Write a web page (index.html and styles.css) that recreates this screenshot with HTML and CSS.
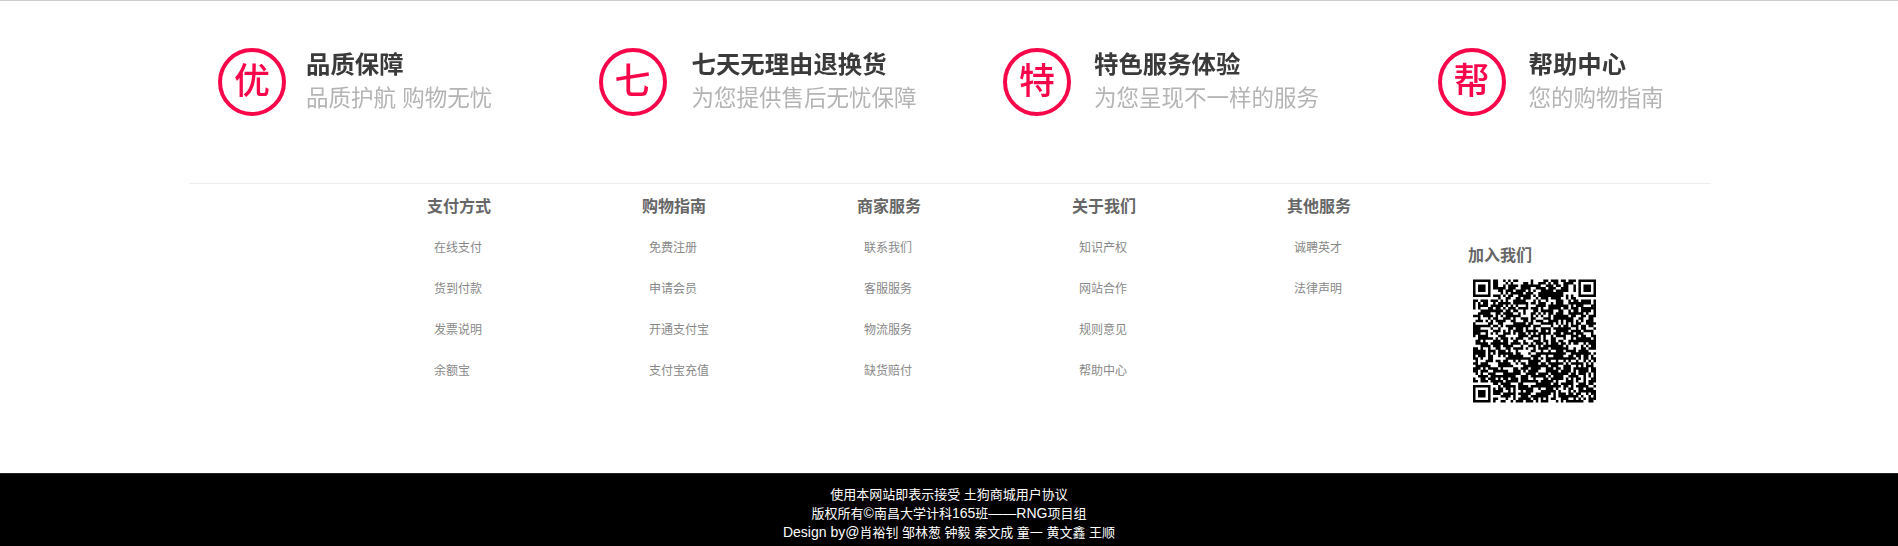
FILE: index.html
```html
<!DOCTYPE html>
<html lang="zh-CN">
<head>
<meta charset="utf-8">
<title>土狗商城</title>
<link rel="stylesheet" href="styles.css">
</head>
<body>
<div class="wrap">
  <section class="features">
    <div class="feature f1">
      <span class="badge">优</span>
      <div class="feature-text"><div class="feature-title">品质保障</div><div class="feature-sub">品质护航 购物无忧</div></div>
    </div>
    <div class="feature f2">
      <span class="badge">七</span>
      <div class="feature-text"><div class="feature-title">七天无理由退换货</div><div class="feature-sub">为您提供售后无忧保障</div></div>
    </div>
    <div class="feature f3">
      <span class="badge">特</span>
      <div class="feature-text"><div class="feature-title">特色服务体验</div><div class="feature-sub">为您呈现不一样的服务</div></div>
    </div>
    <div class="feature f4">
      <span class="badge">帮</span>
      <div class="feature-text"><div class="feature-title">帮助中心</div><div class="feature-sub">您的购物指南</div></div>
    </div>
  </section>
  <section class="columns">
    <div class="col">
      <h4>支付方式</h4>
      <ul><li>在线支付</li><li>货到付款</li><li>发票说明</li><li>余额宝</li></ul>
    </div>
    <div class="col">
      <h4>购物指南</h4>
      <ul><li>免费注册</li><li>申请会员</li><li>开通支付宝</li><li>支付宝充值</li></ul>
    </div>
    <div class="col">
      <h4>商家服务</h4>
      <ul><li>联系我们</li><li>客服服务</li><li>物流服务</li><li>缺货赔付</li></ul>
    </div>
    <div class="col">
      <h4>关于我们</h4>
      <ul><li>知识产权</li><li>网站合作</li><li>规则意见</li><li>帮助中心</li></ul>
    </div>
    <div class="col col-short">
      <h4>其他服务</h4>
      <ul><li>诚聘英才</li><li>法律声明</li></ul>
    </div>
    <div class="join">
      <h4>加入我们</h4>
      <svg class="qr" id="qr" viewBox="0 0 49 49" aria-label="QR"></svg>
    </div>
  </section>
</div>
<footer class="legal">
  <p>使用本网站即表示接受 土狗商城用户协议</p>
  <p>版权所有<span class="latin">©</span>南昌大学计科<span class="latin">165</span>班<span class="latin">——RNG</span>项目组</p>
  <p><span class="latin">Design by@</span>肖裕钊 邹林葱 钟毅 秦文成 童一 黄文鑫 王顺</p>
</footer>
<script src="qr.js"></script>
</body>
</html>
```
FILE: styles.css
```css
* { box-sizing: border-box; }
html, body { margin: 0; padding: 0; background: #fff; }
body {
  height: 546px;
  overflow: hidden;
  border-top: 1px solid #ccc;
  font-family: "Liberation Sans", "Noto Sans CJK SC", sans-serif;
}
.wrap { width: 1522px; margin-left: 189px; }
.features {
  display: grid;
  grid-template-columns: repeat(4, 1fr);
  height: 183px;
  padding-top: 47px;
  border-bottom: 1px solid #eee;
}
.feature { display: flex; align-items: flex-start; height: 68px; filter: blur(0.45px); }
.f1 { margin-left: 29px; }
.f2 { margin-left: 29px; }
.f3 { margin-left: 53px; }
.f4 { margin-left: 107px; }
.badge {
  flex: none;
  width: 68px;
  height: 68px;
  border: 4px solid #f7064a;
  border-radius: 50%;
  display: flex;
  align-items: center;
  justify-content: center;
  color: #f7064a;
  font-size: 36px;
  font-weight: 500;
  line-height: 1;
}
.feature-text { margin-left: 20px; }
.f2 .feature-text { margin-left: 25px; }
.f3 .feature-text { margin-left: 23px; }
.f4 .feature-text { margin-left: 23px; }
.feature-title { font-size: 24.4px; line-height: 33px; font-weight: 700; color: #3a3a3a; white-space: nowrap; }
.feature-sub { font-size: 22.5px; line-height: 35px; color: #b4b4b4; white-space: nowrap; }

.columns { display: flex; height: 289px; padding-left: 238px; }
.col { width: 215px; flex: none; }
.col-short { width: 181px; }
h4 { margin: 0; height: 44px; font-size: 16px; font-weight: 700; line-height: 46px; color: #666; }
ul { list-style: none; margin: 0; padding: 0 0 0 7px; }
li { font-size: 12px; line-height: 41px; color: #888; white-space: nowrap; }
.join { margin-top: 60px; }
.join h4 { height: 24px; line-height: 24px; }
.qr { display: block; width: 123px; height: 124px; margin: 11px 0 0 5px; filter: blur(0.3px); }

.legal { height: 73px; background: #000; color: #fff; text-align: center; padding-top: 11px; border-top: 1px solid #222; }
.legal p { margin: 0; font-size: 13px; line-height: 19px; }
.latin { font-size: 14px; }
```
FILE: qr.js
```js
(function () {
  var n = 49, svg = document.getElementById('qr'), d = '';
  var seed = 165;
  function rnd() { seed = (seed * 1664525 + 1013904223) >>> 0; return (seed >>> 8) / 16777216; }
  function reserved(x, y) {
    return (x < 8 && y < 8) || (x >= n - 8 && y < 8) || (x < 8 && y >= n - 8);
  }
  for (var y = 0; y < n; y++) {
    for (var x = 0; x < n; x++) {
      if (!reserved(x, y) && rnd() < 0.64) d += 'M' + x + ' ' + y + 'h1v1h-1z';
    }
  }
  [[0, 0], [n - 7, 0], [0, n - 7]].forEach(function (p) {
    var a = p[0], b = p[1];
    d += 'M' + a + ' ' + b + 'h7v7h-7zM' + (a + 1) + ' ' + (b + 1) + 'v5h5v-5z';
    d += 'M' + (a + 2) + ' ' + (b + 2) + 'h3v3h-3z';
  });
  var path = document.createElementNS('http://www.w3.org/2000/svg', 'path');
  path.setAttribute('d', d);
  path.setAttribute('fill', '#000');
  path.setAttribute('fill-rule', 'evenodd');
  svg.appendChild(path);
})();
```
